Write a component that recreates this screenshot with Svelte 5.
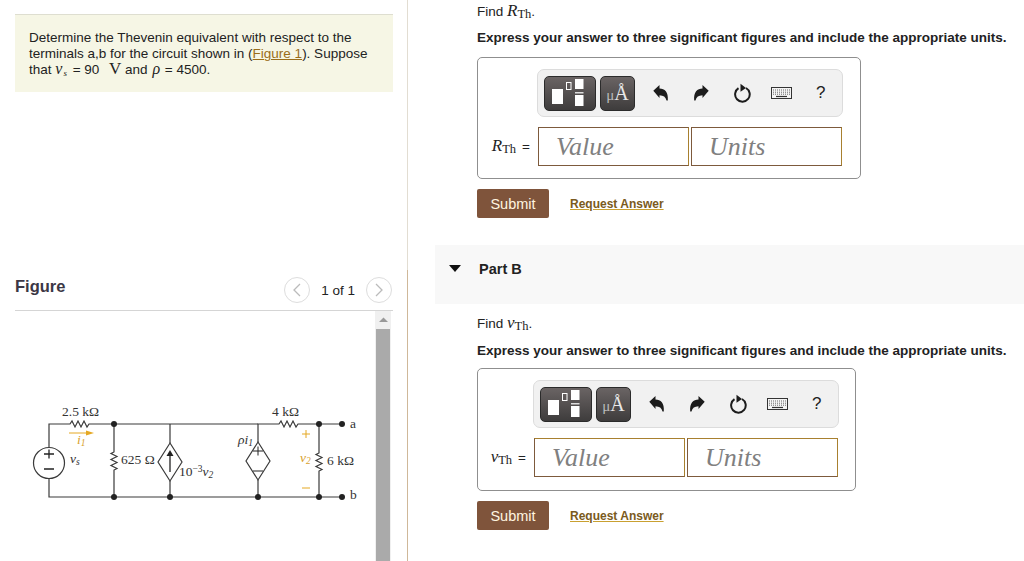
<script>
  const parts = [
    { sym: 'R', sub: 'Th', width: 384, height: 122, gap: 11, toolMargin: 59, entryMargin: 12 },
    { sym: 'v', sub: 'Th', width: 379, height: 123, gap: 9, toolMargin: 55, entryMargin: 8 }
  ];
</script>

{#snippet toolbar()}
  <div class="toolbar">
    <div class="tool wide">
      <svg width="50" height="33" viewBox="1 1 50 33">
        <rect x="8" y="13" width="11" height="15" fill="#fff" />
        <rect x="22.500" y="6.500" width="4.500" height="7" fill="none" stroke="#fff" stroke-width="1" />
        <rect x="31" y="3" width="8.500" height="10" fill="#fff" />
        <rect x="31" y="16" width="8.500" height="1.500" fill="#ddd" />
        <rect x="31" y="19" width="8.500" height="11" fill="#fff" />
      </svg>
    </div>
    <div class="tool unit"><span class="mu">μ</span><span class="ang">Å</span></div>
    <svg class="ic first" width="16" height="16" viewBox="0 0 16 16">
      <path d="M.3 5.800 6.500 0v3.400c5.200.1 9 3.500 8.300 12.100h-1.300c-.8-3.500-3-5.200-7-5.300v2.700z" fill="#1c1c1c" />
    </svg>
    <svg class="ic redo" width="16" height="16" viewBox="0 0 16 16">
      <path d="M15.700 5.800 9.500 0v3.400c-5.200.1-9 3.500-8.300 12.100h1.300c.8-3.500 3-5.200 7-5.300v2.700z" fill="#1c1c1c" />
    </svg>
    <svg class="ic reset" width="18" height="20" viewBox="0 0 18 20">
      <path d="M5.500 5.200A7.300 7.300 0 1 0 13 5" fill="none" stroke="#1c1c1c" stroke-width="2" />
      <path d="M7.500 .8 13 5 7.500 8.800z" fill="#1c1c1c" />
    </svg>
    <svg class="ic kbd" width="21" height="12" viewBox="0 0 21 12">
      <rect x=".5" y=".5" width="20" height="11" fill="#f4f4f4" stroke="#333" />
      <path d="M2 3h17M2 5.200h17M2 7.200h17" stroke="#666" stroke-width="1" stroke-dasharray="1 1" />
      <path d="M5 9.500h11" stroke="#333" stroke-width="1.200" />
    </svg>
    <span class="help">?</span>
  </div>
{/snippet}

{#snippet answer(p)}
  <p class="find">Find <i class="m">{p.sym}</i><span class="msub">{p.sub}</span>.</p>
  <p class="express">Express your answer to three significant figures and include the appropriate units.</p>
  <div class="box" style="width:{p.width}px;height:{p.height}px;margin-top:{p.gap}px">
    <div style="margin-left:{p.toolMargin}px">{@render toolbar()}</div>
    <div class="entry" style="margin-left:{p.entryMargin}px">
      <span class="label"><i class="m">{p.sym}</i><span class="msub">{p.sub}</span><span class="eq">=</span></span>
      <div class="field">Value</div>
      <div class="field">Units</div>
    </div>
  </div>
  <div class="actions">
    <button class="submit" type="button">Submit</button>
    <a class="req" href="#top">Request Answer</a>
  </div>
{/snippet}

<div class="page">
  <section class="left">
    <div class="prompt">
      <p>Determine the Thevenin equivalent with respect to the terminals a,b for the circuit shown in (<a href="#top">Figure 1</a>). Suppose that <i class="m">v</i><i class="s">s</i> = 90 <span class="volt">V</span> and <i class="m rho">ρ</i> = 4500.</p>
    </div>
    <div class="fig-head">
      <h2>Figure</h2>
      <div class="pager">
        <span class="circle"><svg width="8" height="14" viewBox="0 0 8 14"><path d="M7 1 1 7l6 6" fill="none" stroke="#bbb" stroke-width="1.300" /></svg></span>
        <span class="count">1 of 1</span>
        <span class="circle"><svg width="8" height="14" viewBox="0 0 8 14"><path d="m1 1 6 6-6 6" fill="none" stroke="#bbb" stroke-width="1.300" /></svg></span>
      </div>
    </div>
    <div class="fig-body">
      <svg class="circuit" width="358" height="250" viewBox="15 311 358 250">
        <g fill="none" stroke="#3a3a3a" stroke-width="1.200">
          <path d="M49 447V424H70l2-3 3 6 3-6 3 6 3-6 3 6 2-3H258" />
          <path d="M258 442V424H279l2-3 3 6 3-6 3 6 3-6 3 6 2-3H342" />
          <path d="M49 479V497H342" />
          <circle cx="49" cy="463" r="15.500" />
          <path d="M114 424V452l-3 1.500 6 3-6 3 6 3-6 3 6 3-3 1.500V497" />
          <path d="M170 424V443M170 481V497" />
          <path d="M170 443 182 462 170 481 158 462Z" />
          <path d="M258 442 270 461 258 480 246 461Z" />
          <path d="M258 480V497" />
          <path d="M319 424V453l-3 1.500 6 3-6 3 6 3-6 3 6 3-3 1.500V497" />
        </g>
        <path d="M170 472V454" stroke="#222" stroke-width="1.300" />
        <path d="M170 450l-3.500 6h7z" fill="#222" />
        <g fill="#222">
          <circle cx="114" cy="424" r="3" /><circle cx="114" cy="497" r="3" />
          <circle cx="170" cy="497" r="3" /><circle cx="258" cy="497" r="3" />
          <circle cx="319" cy="424" r="3" /><circle cx="319" cy="497" r="3" />
          <circle cx="342" cy="424" r="3" /><circle cx="342" cy="497" r="3" />
        </g>
        <path d="M44 454h10M49 449.500v9M44 469h10" stroke="#222" stroke-width="1.300" fill="none" />
        <path d="M253 451h10M258 446.500v9M253 471h10" stroke="#222" stroke-width="1" fill="none" />
        <path d="M69 433h18" stroke="#e5a823" stroke-width="1" />
        <path d="M94 433l-8-2.500v5z" fill="#e5a823" />
        <path d="M302 434h8M306 430v8M302 488h8" stroke="#e5a823" stroke-width="1" fill="none" />
        <g class="ctext">
          <text x="62" y="416">2.5 kΩ</text>
          <text x="272" y="416">4 kΩ</text>
          <text x="121" y="464">625 Ω</text>
          <text x="327" y="465">6 kΩ</text>
          <text x="350" y="428">a</text>
          <text x="350" y="499">b</text>
          <text x="70" y="463" class="it">v<tspan class="sm" dy="2">s</tspan></text>
          <text x="179" y="476">10<tspan class="sm" dy="-4">−3</tspan><tspan class="it" dy="4">v</tspan><tspan class="sm it" dy="2">2</tspan></text>
          <text x="238" y="444" class="it">ρi<tspan class="sm" dy="2">1</tspan></text>
          <text x="77" y="444" class="it amber">i<tspan class="sm" dy="2">1</tspan></text>
          <text x="300" y="462" class="it amber">v<tspan class="sm" dy="2">2</tspan></text>
        </g>
      </svg>
      <div class="scrollbar">
        <svg width="15" height="15" viewBox="0 0 15 15"><path d="M3 10 7.500 5.500 12 10z" fill="#999" /></svg>
        <div class="thumb"></div>
      </div>
    </div>
  </section>

  <section class="right">
    <div class="part">{@render answer(parts[0])}</div>
    <div class="band">
      <svg width="12" height="8" viewBox="0 0 12 8"><path d="M0 0h12L6 7z" fill="#111" /></svg>
      <strong>Part B</strong>
    </div>
    <div class="part second">{@render answer(parts[1])}</div>
  </section>
</div>

<style>
  :global(body) { margin: 0; background: #fff; }
  .page {
    width: 1024px; height: 561px; overflow: hidden; display: flex;
    font-family: "Liberation Sans", Arial, sans-serif; color: #222;
  }
  p { margin: 0; }
  .m, .s, .volt { font-family: "Liberation Serif", "DejaVu Serif", serif; }
  .left {
    box-sizing: border-box; width: 408px; height: 561px; padding: 14px 14px 0 15px;
    border-right: 1px solid; border-image: linear-gradient(#e2ddd2 270px, #cfb899 270px) 1; flex: none;
  }
  .prompt {
    box-sizing: border-box; height: 78px; padding: 15px 14px; background: #f6f6e5;
    border-top: 1px solid #deded0; font-size: 13.500px; line-height: 16px;
  }
  .prompt a { color: #9a6d1a; }
  .prompt .m { font-size: 16px; line-height: 1px; }
  .s { font-size: 9px; line-height: 1px; position: relative; top: 2px; margin: 0 2px 0 1px; }
  .volt { font-size: 17px; line-height: 1px; margin-left: 6px; }
  .rho { margin: 0 1px; }
  .fig-head {
    box-sizing: border-box; height: 219px; padding-bottom: 7px;
    display: flex; justify-content: space-between; align-items: flex-end;
    border-bottom: 1px solid #d5d5d5;
  }
  h2 { margin: 0 0 7px; font-size: 16.500px; font-weight: bold; color: #3b3745; }
  .pager { display: flex; align-items: center; gap: 11px; margin-right: 1px; font-size: 13.500px; }
  .circle {
    box-sizing: border-box; width: 26px; height: 26px; border: 1px solid #ddd; border-radius: 50%;
    display: flex; align-items: center; justify-content: center;
  }
  .fig-body { display: flex; justify-content: space-between; height: 250px; }
  .circuit { flex: none; }
  .ctext text { font-family: "Liberation Serif", serif; font-size: 13.500px; fill: #333; }
  .it { font-style: italic; }
  .sm { font-size: 9.500px; }
  .amber { fill: #d99f2c !important; }
  .scrollbar { width: 16px; background: #f0f0f0; margin-right: 2px; flex: none; }
  .scrollbar svg { display: block; margin: 1px auto 2px; }
  .thumb { height: 234px; background: #aaa; margin: 0 1px; }
  .right { flex: 1; min-width: 0; }
  .part { padding: 3px 0 0 69px; }
  .second { padding-top: 11px; }
  .find { font-size: 13.500px; line-height: 16px; height: 16px; white-space: nowrap; }
  .m { font-size: 17px; }
  .msub { font-family: "Liberation Serif", serif; font-size: 12.500px; position: relative; top: 2px; }
  .express { margin-top: 11px; font-size: 13.500px; line-height: 16px; font-weight: bold; white-space: nowrap; }
  .second .express { margin-top: 12px; }
  .box {
    box-sizing: border-box; padding-top: 11px;
    border: 1px solid #8f8f8f; border-radius: 5px;
  }
  .toolbar {
    box-sizing: border-box; width: 306px; height: 48px; display: flex; align-items: center;
    padding-left: 6px; background: #f1f1f1; border: 1px solid #dcdcdc; border-radius: 7px;
  }
  .tool {
    box-sizing: border-box; height: 35px; border-radius: 5px; border: 1px solid #2b2b2b;
    background: linear-gradient(#6a6464, #3e3c3c); display: flex; align-items: center; justify-content: center;
  }
  .wide { width: 52px; margin-right: 4px; }
  .unit { width: 35px; color: #e8e8e8; font-family: "Liberation Serif", serif; }
  .mu { font-size: 15px; margin-top: 4px; color: #bbb; }
  .ang { font-size: 20px; }
  .ic { flex: none; }
  .first { margin-left: 18px; }
  .redo { margin-left: 24px; }
  .reset { margin-left: 24px; }
  .kbd { margin-left: 20px; }
  .help { margin-left: 24px; font-size: 17px; color: #222; }
  .entry { display: flex; align-items: center; margin-top: 10px; height: 39px; }
  .label {
    box-sizing: border-box; width: 48px; padding-right: 8px; padding-bottom: 2px; font-size: 13.500px;
    white-space: nowrap; display: flex; justify-content: flex-end; align-items: baseline;
  }
  .eq { margin-left: 6px; }
  .field {
    box-sizing: border-box; width: 151px; height: 39px; margin-right: 2px; border: 1px solid #7d5a3c;
    border-right-color: #a8802f; padding-left: 17px; line-height: 38px;
    font-family: "Liberation Serif", serif; font-style: italic; font-size: 26px; color: #808080;
  }
  .second .field { border-top-color: #a8802f; }
  .actions { display: flex; align-items: center; margin-top: 10px; height: 29px; gap: 21px; }
  .submit {
    width: 72px; height: 29px; border: 0; border-radius: 2px; padding: 0; background: #7f543b; color: #fff6e0;
    font: 14.500px "Liberation Sans", Arial, sans-serif;
  }
  .req { font-size: 12px; font-weight: bold; color: #7a5a20; text-decoration: underline; text-decoration-color: #c9a030; }
  .band {
    margin: 27px 0 0 27px; height: 59px; background: #f8f8f8; display: flex; align-items: flex-start;
    padding-top: 16px; box-sizing: border-box; font-size: 14.500px; color: #222;
  }
  .band svg { margin: 4px 0 0 14px; }
  .band strong { margin-left: 18px; }
</style>
